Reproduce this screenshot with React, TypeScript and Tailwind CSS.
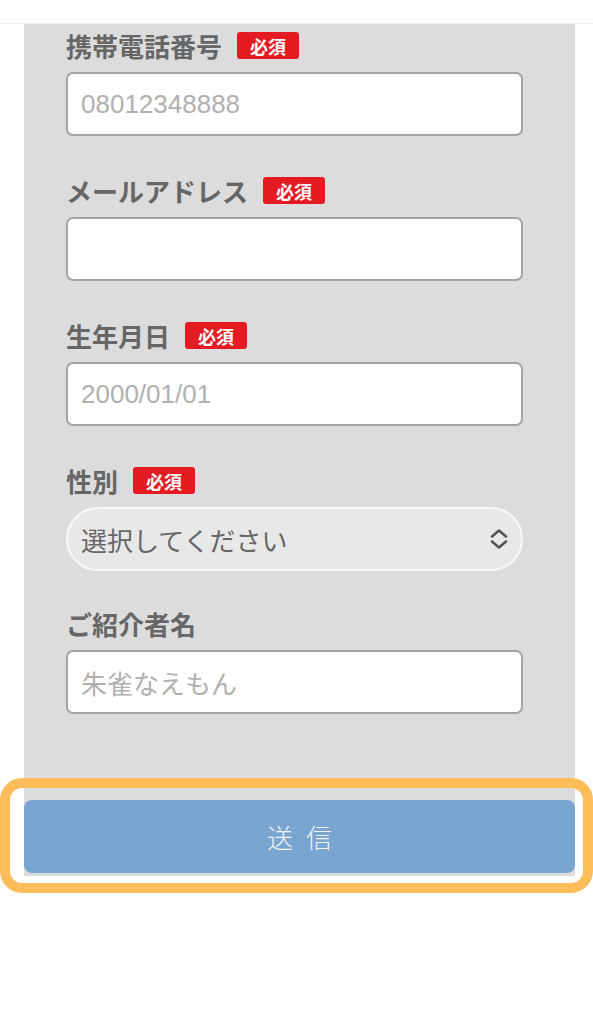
import React from 'react';

const jp = { fontFamily: '"Noto Sans CJK JP", "Noto Sans", sans-serif' };
const num = { fontFamily: '"Liberation Sans", "Noto Sans CJK JP", sans-serif' };

function Label({ text, required }: { text: string; required?: boolean }) {
  return (
    <div className="flex items-center h-[27px] mb-[13px]" style={jp}>
      <span className="text-[26px] font-bold text-[#666] leading-none">{text}</span>
      {required && (
        <span className="ml-[15px] h-[27px] w-[62px] flex items-center justify-center rounded-[3px] bg-[#e41b23] text-white text-[18px] font-bold leading-none">
          必須
        </span>
      )}
    </div>
  );
}

function TextInput({ placeholder, font = jp }: { placeholder?: string; font?: React.CSSProperties }) {
  return (
    <input
      type="text"
      placeholder={placeholder}
      style={font}
      className="block w-full h-[64px] px-[13px] bg-white border-2 border-[#a3a3a3] rounded-[7px] text-[26px] text-[#333] placeholder:text-[#b0b0b0] outline-none"
    />
  );
}

export default function App() {
  return (
    <div className="relative w-[593px] h-[1024px] bg-white">
      <div className="h-[24px] border-b border-[#ececec]" />
      <div className="ml-[24px] mr-[18px] bg-[#dcdcdc] pt-[8px] pb-[3px]">
        <div className="pl-[42px] pr-[52px]">
          <Label text="携帯電話番号" required />
          <TextInput placeholder="08012348888" font={num} />

          <div className="mt-[41px]">
            <Label text="メールアドレス" required />
            <TextInput />
          </div>

          <div className="mt-[41px]">
            <Label text="生年月日" required />
            <TextInput placeholder="2000/01/01" font={num} />
          </div>

          <div className="mt-[41px]">
            <Label text="性別" required />
            <div className="flex items-center justify-between h-[64px] pl-[13px] pr-[12px] rounded-full bg-[#e8e8e8] border-2 border-[#f8f8f8]" style={jp}>
              <span className="text-[26px] text-[#666]">選択してください</span>
              <svg width="20" height="22" viewBox="0 0 20 22" fill="none" stroke="#555" strokeWidth="2.6" strokeLinecap="round" strokeLinejoin="round">
                <path d="M3 8.5 L10 2.5 L17 8.5" />
                <path d="M3 13.5 L10 19.5 L17 13.5" />
              </svg>
            </div>
          </div>

          <div className="mt-[39px]">
            <Label text="ご紹介者名" />
            <TextInput placeholder="朱雀なえもん" />
          </div>
        </div>

        <button
          className="mt-[86px] w-full h-[73px] rounded-[8px] bg-[#78a6d1] text-[#eef2f6] text-[26px] font-light flex items-center justify-center"
          style={jp}
        >
          <span className="mr-[13px]">送</span>
          <span>信</span>
        </button>
      </div>

      <div className="absolute left-0 right-0 top-[778px] h-[115px] border-[10px] border-[#ffbd5a] rounded-[22px] pointer-events-none" />
    </div>
  );
}
